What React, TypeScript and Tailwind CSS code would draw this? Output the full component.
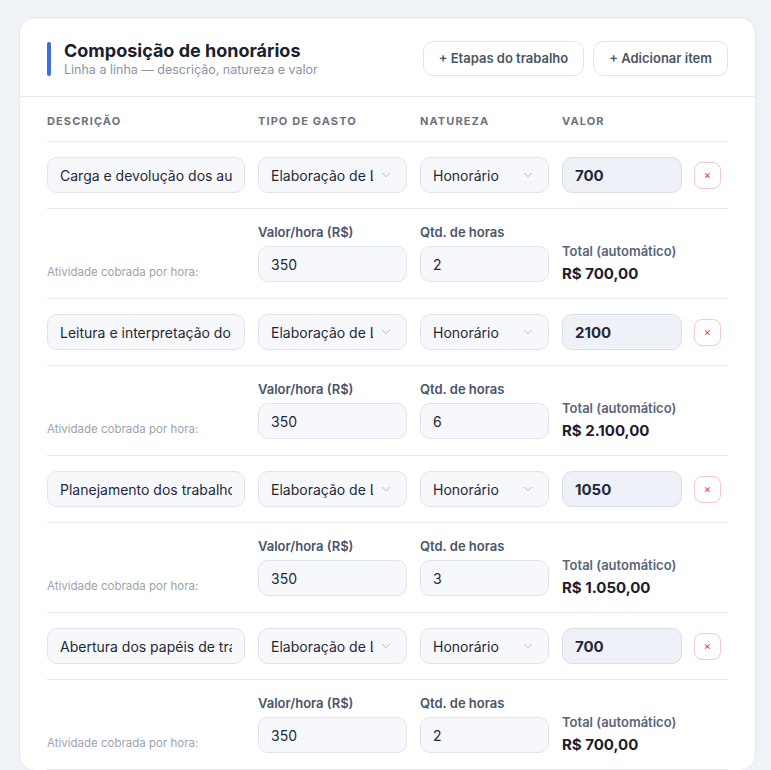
import { ChevronDown } from 'lucide-react';

const rows = [
  { desc: 'Carga e devolução dos autos', valor: '700', rate: '350', hours: '2', total: 'R$ 700,00' },
  { desc: 'Leitura e interpretação do processo', valor: '2100', rate: '350', hours: '6', total: 'R$ 2.100,00' },
  { desc: 'Planejamento dos trabalhos periciais', valor: '1050', rate: '350', hours: '3', total: 'R$ 1.050,00' },
  { desc: 'Abertura dos papéis de trabalho', valor: '700', rate: '350', hours: '2', total: 'R$ 700,00' },
];

const grid = 'grid grid-cols-[198px_149px_129px_120px_27px] gap-x-[13px]';

function Select({ value }: { value: string }) {
  return (
    <div className="h-[36px] flex items-center rounded-[10px] border border-[#e0e4eb] bg-[#f7f8fb] pl-3 pr-[13px]">
      <span className="flex-1 overflow-hidden whitespace-nowrap text-[14px] text-[#1f2937] mr-[6px]">{value}</span>
      <ChevronDown size={14} strokeWidth={1.4} className="text-[#a3abb8] shrink-0" />
    </div>
  );
}

function Field({ value, className = '' }: { value: string; className?: string }) {
  return (
    <input
      readOnly
      value={value}
      className={`w-full h-[36px] rounded-[10px] border border-[#e0e4eb] bg-[#f7f8fb] px-3 text-[14px] text-[#1f2937] outline-none ${className}`}
    />
  );
}

export default function App() {
  return (
    <div className="min-h-screen bg-[#eff2f7] pt-[17px] pl-[19px] pr-[15px] font-['Inter',sans-serif]">
      <div className="bg-white rounded-2xl border border-[#e3e7ee] overflow-hidden">
        {/* Header */}
        <div className="h-[79px] flex items-center justify-between px-[27px] pt-[3px] border-b border-[#e6e9ef]">
          <div className="flex items-center gap-[13px]">
            <div className="w-1 h-[34px] rounded-full bg-[#3a6fdc]" />
            <div>
              <h2 className="text-[18px] font-bold leading-[22px] text-[#1a202c]">Composição de honorários</h2>
              <p className="text-[12.5px] leading-[14px] text-[#8b94a3] mt-[1px]">Linha a linha — descrição, natureza e valor</p>
            </div>
          </div>
          <div className="flex gap-[9px]">
            <button className="h-[35px] px-[15px] rounded-[10px] border border-[#e0e4eb] bg-white text-[13px] font-semibold text-[#4b5563]">
              + Etapas do trabalho
            </button>
            <button className="h-[35px] px-[15px] rounded-[10px] border border-[#e0e4eb] bg-white text-[13px] font-semibold text-[#4b5563]">
              + Adicionar item
            </button>
          </div>
        </div>

        <div className="px-[27px]">
          {/* Column headers */}
          <div className={`${grid} pt-4 pb-3 border-b border-[#e6e9ef] text-[11px] leading-4 font-bold tracking-[0.1em] text-[#6b7280]`}>
            <span>DESCRIÇÃO</span>
            <span>TIPO DE GASTO</span>
            <span>NATUREZA</span>
            <span>VALOR</span>
            <span />
          </div>

          {rows.map((r, i) => (
            <div key={i}>
              {/* Main row */}
              <div className={`${grid} py-[15px] border-b border-[#e6e9ef] items-center`}>
                <Field value={r.desc} />
                <Select value="Elaboração de Laudo" />
                <Select value="Honorário" />
                <Field value={r.valor} className="!bg-[#eef1f7] !border-[#d9dee8] font-bold text-[15px]" />
                <button className="w-[27px] h-[27px] -ml-px rounded-lg border border-[#f3c9cf] bg-white text-[#d2424f] text-[11px] leading-none flex items-center justify-center">
                  ×
                </button>
              </div>

              {/* Hourly row */}
              <div className={`${grid} pt-[15px] pb-[16px] border-b border-[#e6e9ef]`}>
                <span className="self-end mb-[1px] text-[11.5px] text-[#9ca3af]">Atividade cobrada por hora:</span>
                <div>
                  <div className="text-[13px] leading-4 font-semibold text-[#4a5568] mb-1.5">Valor/hora (R$)</div>
                  <Field value={r.rate} />
                </div>
                <div>
                  <div className="text-[13px] leading-4 font-semibold text-[#4a5568] mb-1.5">Qtd. de horas</div>
                  <Field value={r.hours} />
                </div>
                <div className="col-span-2 self-end mb-[-2px]">
                  <div className="text-[13px] leading-4 font-semibold text-[#5a6678]">Total (automático)</div>
                  <div className="text-[15px] font-bold text-[#1a202c] mt-[5px] leading-5">{r.total}</div>
                </div>
              </div>
            </div>
          ))}
        </div>
      </div>
    </div>
  );
}
